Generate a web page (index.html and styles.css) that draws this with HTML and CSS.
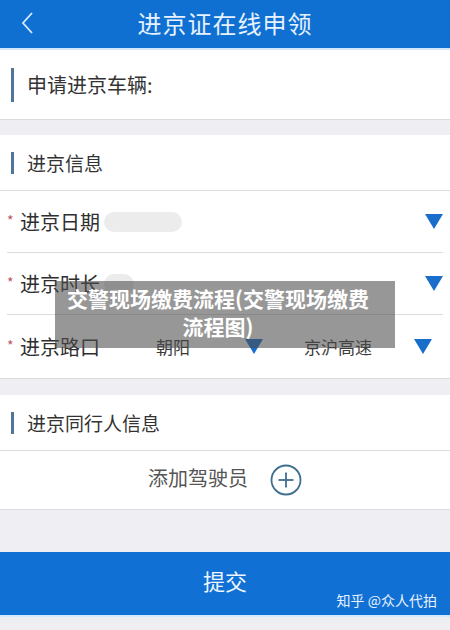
FILE: index.html
```html
<!DOCTYPE html>
<html lang="zh-CN">

<head>
  <meta charset="UTF-8" />
  <meta name="viewport" content="width=device-width, initial-scale=1.0" />
  <title>进京证在线申领</title>
  <link rel="stylesheet" href="styles.css">
</head>

<body>
  <div id="app">
    <header class="topbar">
      <svg class="back" width="14" height="24" viewBox="0 0 14 24">
        <polyline points="11,2 2,12 11,22" fill="none" stroke="#d8ecff" stroke-width="1.8" />
      </svg>
      <h1>进京证在线申领</h1>
      <span></span>
    </header>

    <!-- 车辆 -->
    <section class="card vehicle">
      <div class="title tall"><span class="bar"></span>申请进京车辆:</div>
    </section>

    <!-- 进京信息 -->
    <section class="card">
      <div class="title"><span class="bar"></span>进京信息</div>
      <div class="row">
        <span class="star">*</span>
        <span class="label">进京日期</span>
        <span class="blur"></span>
        <span class="spacer"></span>
        <svg class="tri" width="18" height="15" viewBox="0 0 18 15"><polygon points="0,0 18,0 9,15" /></svg>
      </div>
      <div class="row">
        <span class="star">*</span>
        <span class="label">进京时长</span>
        <span class="blur short"></span>
        <span class="spacer"></span>
        <svg class="tri" width="18" height="15" viewBox="0 0 18 15"><polygon points="0,0 18,0 9,15" /></svg>
      </div>
      <div class="row last">
        <span class="star">*</span>
        <span class="label">进京路口</span>
        <span class="value district">朝阳</span>
        <svg class="tri mid" width="18" height="15" viewBox="0 0 18 15"><polygon points="0,0 18,0 9,15" /></svg>
        <span class="value road">京沪高速</span>
        <svg class="tri end" width="18" height="15" viewBox="0 0 18 15"><polygon points="0,0 18,0 9,15" /></svg>
      </div>
    </section>

    <!-- 同行人 -->
    <section class="card companions">
      <div class="title"><span class="bar"></span>进京同行人信息</div>
      <div class="row add last">
        <span>添加驾驶员</span>
        <svg width="32" height="32" viewBox="0 0 32 32">
          <circle cx="16" cy="16" r="14.5" fill="none" stroke="#3d6f8f" stroke-width="1.8" />
          <line x1="16" y1="8.5" x2="16" y2="23.5" stroke="#3d6f8f" stroke-width="1.8" />
          <line x1="8.5" y1="16" x2="23.5" y2="16" stroke="#3d6f8f" stroke-width="1.8" />
        </svg>
      </div>
    </section>

    <button class="submit">提交<span class="mark">知乎 @众人代拍</span></button>

    <div class="caption">交警现场缴费流程(交警现场缴费<br>流程图)</div>
  </div>
</body>

</html>
```

FILE: styles.css
```css
body {
  margin: 0;
  background-color: #efeff3;
  font-family: "Noto Sans CJK SC", "Noto Sans", sans-serif;
  color: #333;
}

#app {
  width: 450px;
  height: 630px;
  position: relative;
  overflow: hidden;
}

.topbar {
  height: 50px;
  background-color: #1070d2;
  display: grid;
  grid-template-columns: 60px 1fr 60px;
  align-items: center;
  border-bottom: 2px solid #cfe6fb;
  box-sizing: border-box;
}

.topbar .back {
  margin-left: 21px;
  margin-top: -2px;
}

.topbar h1 {
  margin: 0;
  text-align: center;
  font-size: 24px;
  font-weight: normal;
  color: #e6f2ff;
  letter-spacing: 1px;
  margin-top: -4px;
}

.card {
  background-color: #fff;
  border-bottom: 1px solid #dcdcdc;
  margin-bottom: 16px;
}

.vehicle {
  margin-bottom: 15px;
}

.title {
  height: 55px;
  display: flex;
  align-items: center;
  font-size: 19px;
  border-bottom: 1px solid #dcdcdc;
}

.title.tall {
  height: 69px;
  font-size: 20px;
  border-bottom: none;
}

.bar {
  width: 3px;
  height: 22px;
  background-color: #4d7699;
  margin-left: 11px;
  margin-right: 13px;
}

.tall .bar {
  height: 34px;
}

.row {
  height: 61px;
  margin: 0 7px;
  display: flex;
  align-items: center;
  border-bottom: 1px solid #dcdcdc;
}

.row.last {
  border-bottom: none;
  height: 63px;
}

.star {
  color: #c0555a;
  font-size: 14px;
  width: 13px;
  margin-top: -4px;
}

.label {
  font-size: 20px;
  color: #2f2f2f;
}

.blur {
  width: 78px;
  height: 20px;
  margin-left: 4px;
  border-radius: 10px;
  background-color: #ececec;
}

.blur.short {
  width: 30px;
}

.spacer {
  flex: 1;
}

.tri {
  fill: #1a6ecb;
  margin-right: 0;
}

.value {
  font-size: 17px;
  color: #3a3a3a;
}

.district {
  margin-left: 56px;
}

.tri.mid {
  margin-left: 55px;
}

.road {
  margin-left: 41px;
}

.tri.end {
  margin-left: 42px;
}

.companions {
  margin-bottom: 42px;
}

.row.add {
  justify-content: center;
  gap: 22px;
  height: 58px;
  padding-bottom: 6px;
  box-sizing: border-box;
  font-size: 20px;
  color: #555;
}

.add svg {
  margin-top: 5px;
}

.submit {
  display: block;
  width: 450px;
  height: 65px;
  border: none;
  border-bottom: 2px solid #d4e9fb;
  background-color: #1070d4;
  color: #eef6ff;
  font-family: "Noto Sans CJK SC", sans-serif;
  font-size: 22px;
  position: relative;
  padding: 0 0 8px;
}

.mark {
  position: absolute;
  right: 13px;
  bottom: 5px;
  font-size: 14px;
  color: #e8f2ff;
}

.caption {
  position: absolute;
  left: 55px;
  top: 281px;
  width: 340px;
  box-sizing: border-box;
  padding: 3px 14px 8px 0;
  background-color: rgba(75, 75, 75, 0.58);
  color: #fff;
  font-size: 21px;
  font-weight: bold;
  line-height: 28px;
  text-align: center;
}
```
